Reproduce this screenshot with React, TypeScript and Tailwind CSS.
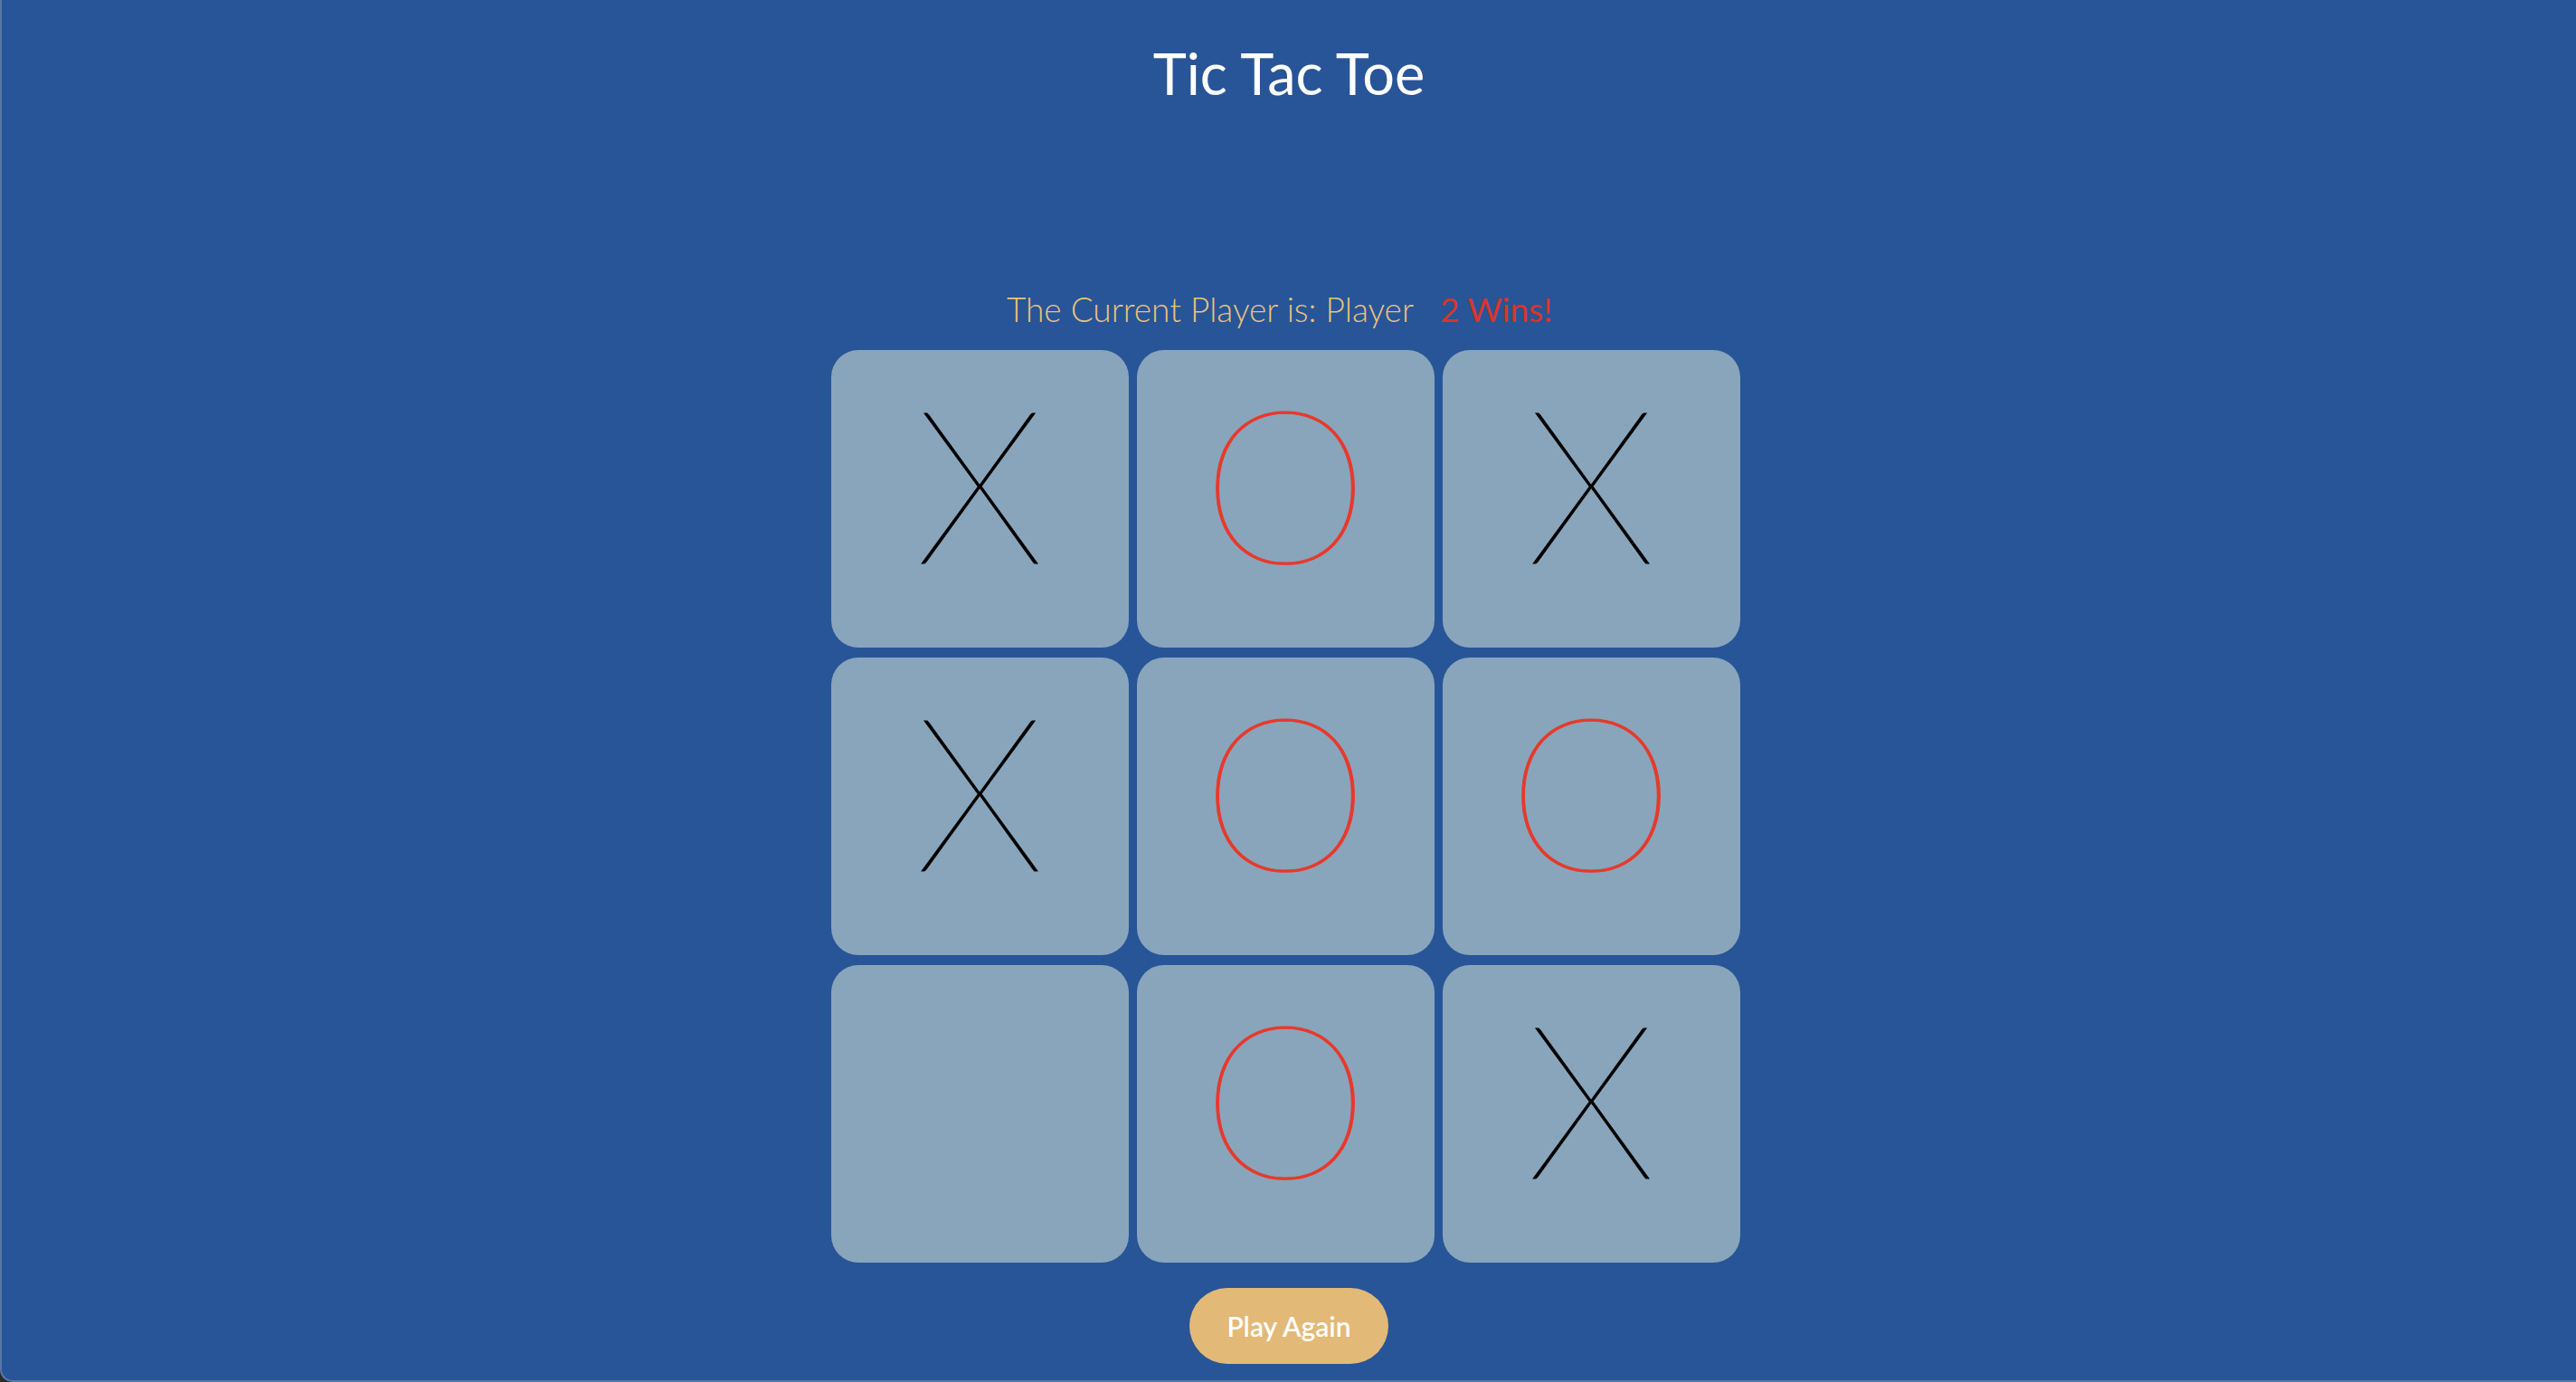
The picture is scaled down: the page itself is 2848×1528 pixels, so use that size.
import React from "react";

type Mark = "X" | "O" | "";

const board: Mark[] = ["X", "O", "X", "X", "O", "O", "", "O", "X"];

function Cell({ mark }: { mark: Mark }) {
  return (
    <div className="w-[329px] h-[329px] rounded-[30px] bg-[#89a5bb] flex items-center justify-center pb-[39px]">
      {mark && (
        <span
          className={
            "text-[236px] font-thin leading-none select-none [-webkit-text-stroke:1px_currentColor] " +
            (mark === "X" ? "text-black" : "text-[#e8392b]")
          }
          style={{ fontFamily: "Lato, 'Liberation Sans', sans-serif" }}
        >
          {mark}
        </span>
      )}
    </div>
  );
}

export default function App() {
  return (
    <div className="w-full h-[1528px] bg-[#2b2b2b]">
      <div
        className="w-full h-full bg-[#275597] border-l-2 border-b-2 border-[#5877a8] rounded-bl-[14px] flex flex-col items-center"
        style={{ fontFamily: "Lato, 'Liberation Sans', sans-serif" }}
      >
        <h1 className="mt-[41px] text-[63px] leading-[80px] font-normal text-white">
          Tic Tac Toe
        </h1>
        <div className="mt-[197px] flex items-baseline pr-[21px] text-[37px] leading-[47px]">
          <span className="font-light text-[#eac27c]">The Current Player is: Player</span>
          <span className="ml-[29px] font-normal text-[#d7352c]">2 Wins!</span>
        </div>
        <div className="mt-[22px] mr-[8px] grid grid-cols-[repeat(3,329px)] gap-x-[9px] gap-y-[11px]">
          {board.map((m, i) => (
            <Cell key={i} mark={m} />
          ))}
        </div>
        <button className="mt-[28px] w-[220px] h-[84px] rounded-full bg-[#e3b978] text-white text-[30px] font-semibold">
          Play Again
        </button>
      </div>
    </div>
  );
}
